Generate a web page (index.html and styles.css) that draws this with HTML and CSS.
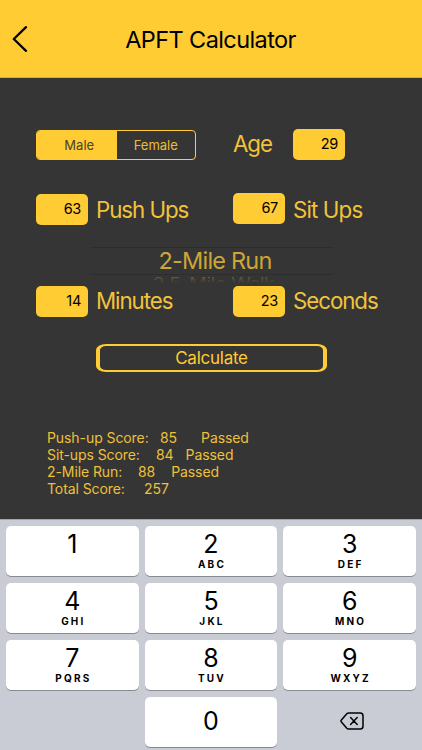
FILE: index.html
```html
<!doctype html>
<html lang="en">
	<head>
	<meta charset="utf-8">
	<title>APFT Calculator</title>
	<link rel="stylesheet" href="styles.css">
	</head>

	<body>
		<div class="header">
			<svg class="back" width="16" height="26" viewBox="0 0 16 26"><path d="M14 1.2L1.8 13L14 24.8"/></svg>
			<h1 class="title">APFT Calculator</h1>
		</div>

		<div class="form">
			<div class="row row-top">
				<div class="col">
					<div class="switch">
						<div class="option selected">Male</div>
						<div class="option">Female</div>
					</div>
				</div>
				<div class="col">
					<label class="label age">Age</label>
					<div class="field">29</div>
				</div>
			</div>

			<div class="row row-reps">
				<div class="col">
					<div class="field">63</div>
					<label class="label">Push Ups</label>
				</div>
				<div class="col raised">
					<div class="field">67</div>
					<label class="label sit">Sit Ups</label>
				</div>
			</div>

			<div class="picker">
				<div class="picked">2-Mile Run</div>
				<div class="next"><span>2.5-Mile Walk</span></div>
			</div>

			<div class="row row-time">
				<div class="col">
					<div class="field">14</div>
					<label class="label">Minutes</label>
				</div>
				<div class="col">
					<div class="field">23</div>
					<label class="label">Seconds</label>
				</div>
			</div>

			<div class="calculate"><span>Calculate</span></div>

			<div class="results">
				<p><span class="name r1">Push-up Score:</span><span class="score">85</span><span class="pass p1">Passed</span></p>
				<p><span class="name r2">Sit-ups Score:</span><span class="score">84</span><span class="pass p2">Passed</span></p>
				<p><span class="name r3">2-Mile Run:</span><span class="score">88</span><span class="pass p3">Passed</span></p>
				<p><span class="name r4">Total Score:</span><span class="score">257</span></p>
			</div>
		</div>

		<div class="keyboard">
			<div class="key"><b>1</b></div>
			<div class="key"><b>2</b><i>ABC</i></div>
			<div class="key"><b>3</b><i>DEF</i></div>
			<div class="key"><b>4</b><i>GHI</i></div>
			<div class="key"><b>5</b><i>JKL</i></div>
			<div class="key"><b>6</b><i>MNO</i></div>
			<div class="key"><b>7</b><i>PQRS</i></div>
			<div class="key"><b>8</b><i>TUV</i></div>
			<div class="key"><b>9</b><i>WXYZ</i></div>
			<div class="blank"></div>
			<div class="key zero"><b>0</b></div>
			<div class="delete">
				<svg width="24" height="18" viewBox="0 0 24 18"><path d="M8.6 1H20.2Q23 1 23 3.8V14.2Q23 17 20.2 17H8.6Q7.6 17 6.8 16.2L1.4 10Q.6 9 1.4 8L6.8 1.8Q7.6 1 8.6 1Z"/><path d="M10.6 5.6L17.2 12.4M17.2 5.6L10.6 12.4"/></svg>
			</div>
		</div>
	</body>
</html>
```
FILE: styles.css
```css
* {
	box-sizing: border-box;
}
body {
	margin: 0;
	width: 422px;
	height: 750px;
	overflow: hidden;
	background: #353535;
	color: #fc3;
	font-family: Inter, "Liberation Sans", sans-serif;
}
.header {
	display: flex;
	align-items: center;
	height: 78px;
	padding-left: 12px;
	background: #fc3;
	border-bottom: 1px solid #d9ae32;
	color: #000;
}
.back {
	fill: none;
	stroke: #000;
	stroke-width: 2.3;
	stroke-linecap: round;
	stroke-linejoin: round;
}
.title {
	flex: 1;
	margin: 2px 0 0;
	padding-right: 29px;
	font-size: 23.5px;
	font-weight: 400;
	letter-spacing: -0.6px;
	text-align: center;
}
.form {
	height: 441px;
	padding: 51px 36px 0;
}
.row {
	display: grid;
	grid-template-columns: 197px 1fr;
	height: 31px;
}
.row-top {
	margin-bottom: 34px;
}
.col {
	display: flex;
	align-items: center;
	white-space: nowrap;
}
.raised {
	margin: -1px 0 1px;
}
.switch {
	display: flex;
	width: 160px;
	height: 30px;
	border: 1px solid #fc3;
	border-radius: 4px;
	overflow: hidden;
}
.option {
	width: 79px;
	font-size: 13px;
	line-height: 28px;
	text-align: center;
	color: #ebbe36;
}
.selected {
	width: 80px;
	padding-left: 5px;
	background: #fc3;
	color: #4a4230;
}
.field {
	width: 52px;
	height: 31px;
	padding-right: 7px;
	background: #fc3;
	border-radius: 5px;
	color: #000;
	font-size: 14.5px;
	line-height: 30px;
	letter-spacing: -0.3px;
	text-align: right;
}
.label {
	margin-left: 8px;
	font-size: 22.3px;
	letter-spacing: -1.05px;
	color: #f2c338;
}
.age {
	width: 60px;
	margin: -2px 0 0;
}
.sit {
	margin-top: 2px;
	letter-spacing: -0.85px;
}
.row-time .label {
	margin-top: -2px;
}
.picker {
	width: 243px;
	height: 37px;
	margin: 22px 0 2px 54px;
	overflow: hidden;
	text-align: center;
	white-space: nowrap;
}
.picked {
	height: 28px;
	padding-left: 7px;
	border-top: 1px solid #2d2d2d;
	border-bottom: 1px solid #2d2d2d;
	font-size: 23.5px;
	line-height: 26px;
	letter-spacing: -0.8px;
	color: #cda637;
}
.next {
	height: 9px;
	overflow: hidden;
	padding-left: 4px;
	font-size: 20px;
	line-height: 20px;
	letter-spacing: -0.6px;
	color: #6a5b35;
	-webkit-mask-image: linear-gradient(#000 20%, transparent 95%);
	mask-image: linear-gradient(#000 20%, transparent 95%);
}
.next span {
	display: inline-block;
	transform: scaleY(0.8);
	transform-origin: top;
}
.calculate {
	width: 231px;
	height: 28px;
	margin: 27px 0 0 60px;
	border: solid #fc3;
	border-width: 2px 4px;
	border-radius: 10px / 6px;
	font-size: 17px;
	line-height: 25px;
	text-align: center;
	letter-spacing: -0.25px;
}
.results {
	margin: 57px 0 0 11px;
	font-size: 14px;
	line-height: 17px;
	letter-spacing: -0.08px;
	color: #eec038;
}
.results p {
	display: flex;
	margin: 0;
}
.name {
	white-space: nowrap;
}
.r1 {
	width: 113px;
}
.r2 {
	width: 109px;
}
.r3 {
	width: 91px;
}
.r4 {
	width: 97px;
}
.p1 {
	margin-left: 24px;
}
.p2 {
	margin-left: 12px;
}
.p3 {
	margin-left: 16px;
}
.keyboard {
	display: grid;
	grid-template-columns: repeat(3, 1fr);
	grid-auto-rows: 50px;
	gap: 7px 6px;
	height: 231px;
	padding: 6px 6px 0;
	background: #c9ccd4;
	border-top: 1px solid #a4a6ab;
	color: #000;
}
.key {
	display: flex;
	flex-direction: column;
	align-items: center;
	background: #fff;
	border-radius: 5px;
	box-shadow: 0 1px 0 #898b8f;
}
.key b {
	margin-top: 2px;
	font-size: 25px;
	font-weight: 400;
	line-height: 32px;
}
.key i {
	padding-left: 2px;
	font-size: 10px;
	font-style: normal;
	font-weight: 700;
	line-height: 8px;
	letter-spacing: 2.2px;
}
.zero b {
	margin-top: 8px;
}
.delete {
	display: flex;
	align-items: center;
	justify-content: center;
	padding: 0 0 3px 4px;
}
.delete svg {
	fill: none;
	stroke: #000;
	stroke-width: 1.5;
	stroke-linecap: round;
}
```
